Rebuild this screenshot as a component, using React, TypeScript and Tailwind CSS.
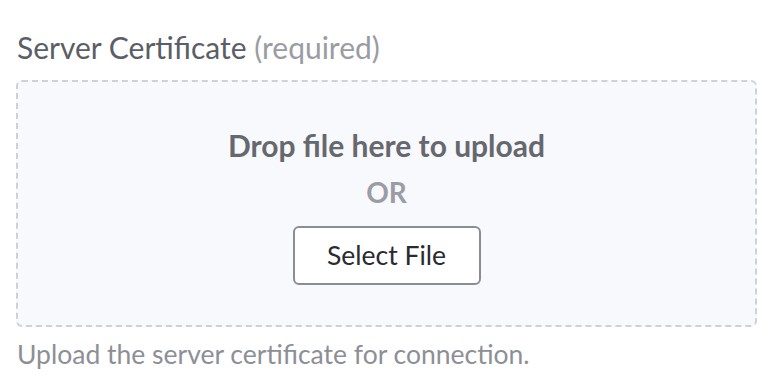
export default function App() {
  return (
    <div className="w-[782px] h-[388px] bg-white px-[16px] pt-[30px]" style={{ fontFamily: 'Lato, "Noto Sans", sans-serif' }}>
      <div className="text-[30px] leading-[34px] text-[#5b5e66] pl-[1px]">
        Server Certificate <span className="text-[#9a9ca3]">(required)</span>
      </div>
      <div className="mt-[16px] w-[741px] h-[247px] border-2 border-dashed border-[#d0d1d5] rounded-[6px] bg-[#f8f9fc] flex flex-col items-center pt-[45px]">
        <div className="text-[30px] font-bold leading-[36px] text-[#66686f]">Drop file here to upload</div>
        <div className="mt-[13px] text-[28px] font-bold leading-[32px] text-[#9b9da4]">OR</div>
        <button className="mt-[18px] w-[188px] h-[59px] rounded-[6px] border-2 border-[#8b8d93] bg-white text-[26.5px] text-[#2a2b2f]">Select File</button>
      </div>
      <div className="mt-[11px] text-[26.5px] leading-[32px] text-[#8d8f96] pl-[1px]">Upload the server certificate for connection.</div>
    </div>
  );
}
